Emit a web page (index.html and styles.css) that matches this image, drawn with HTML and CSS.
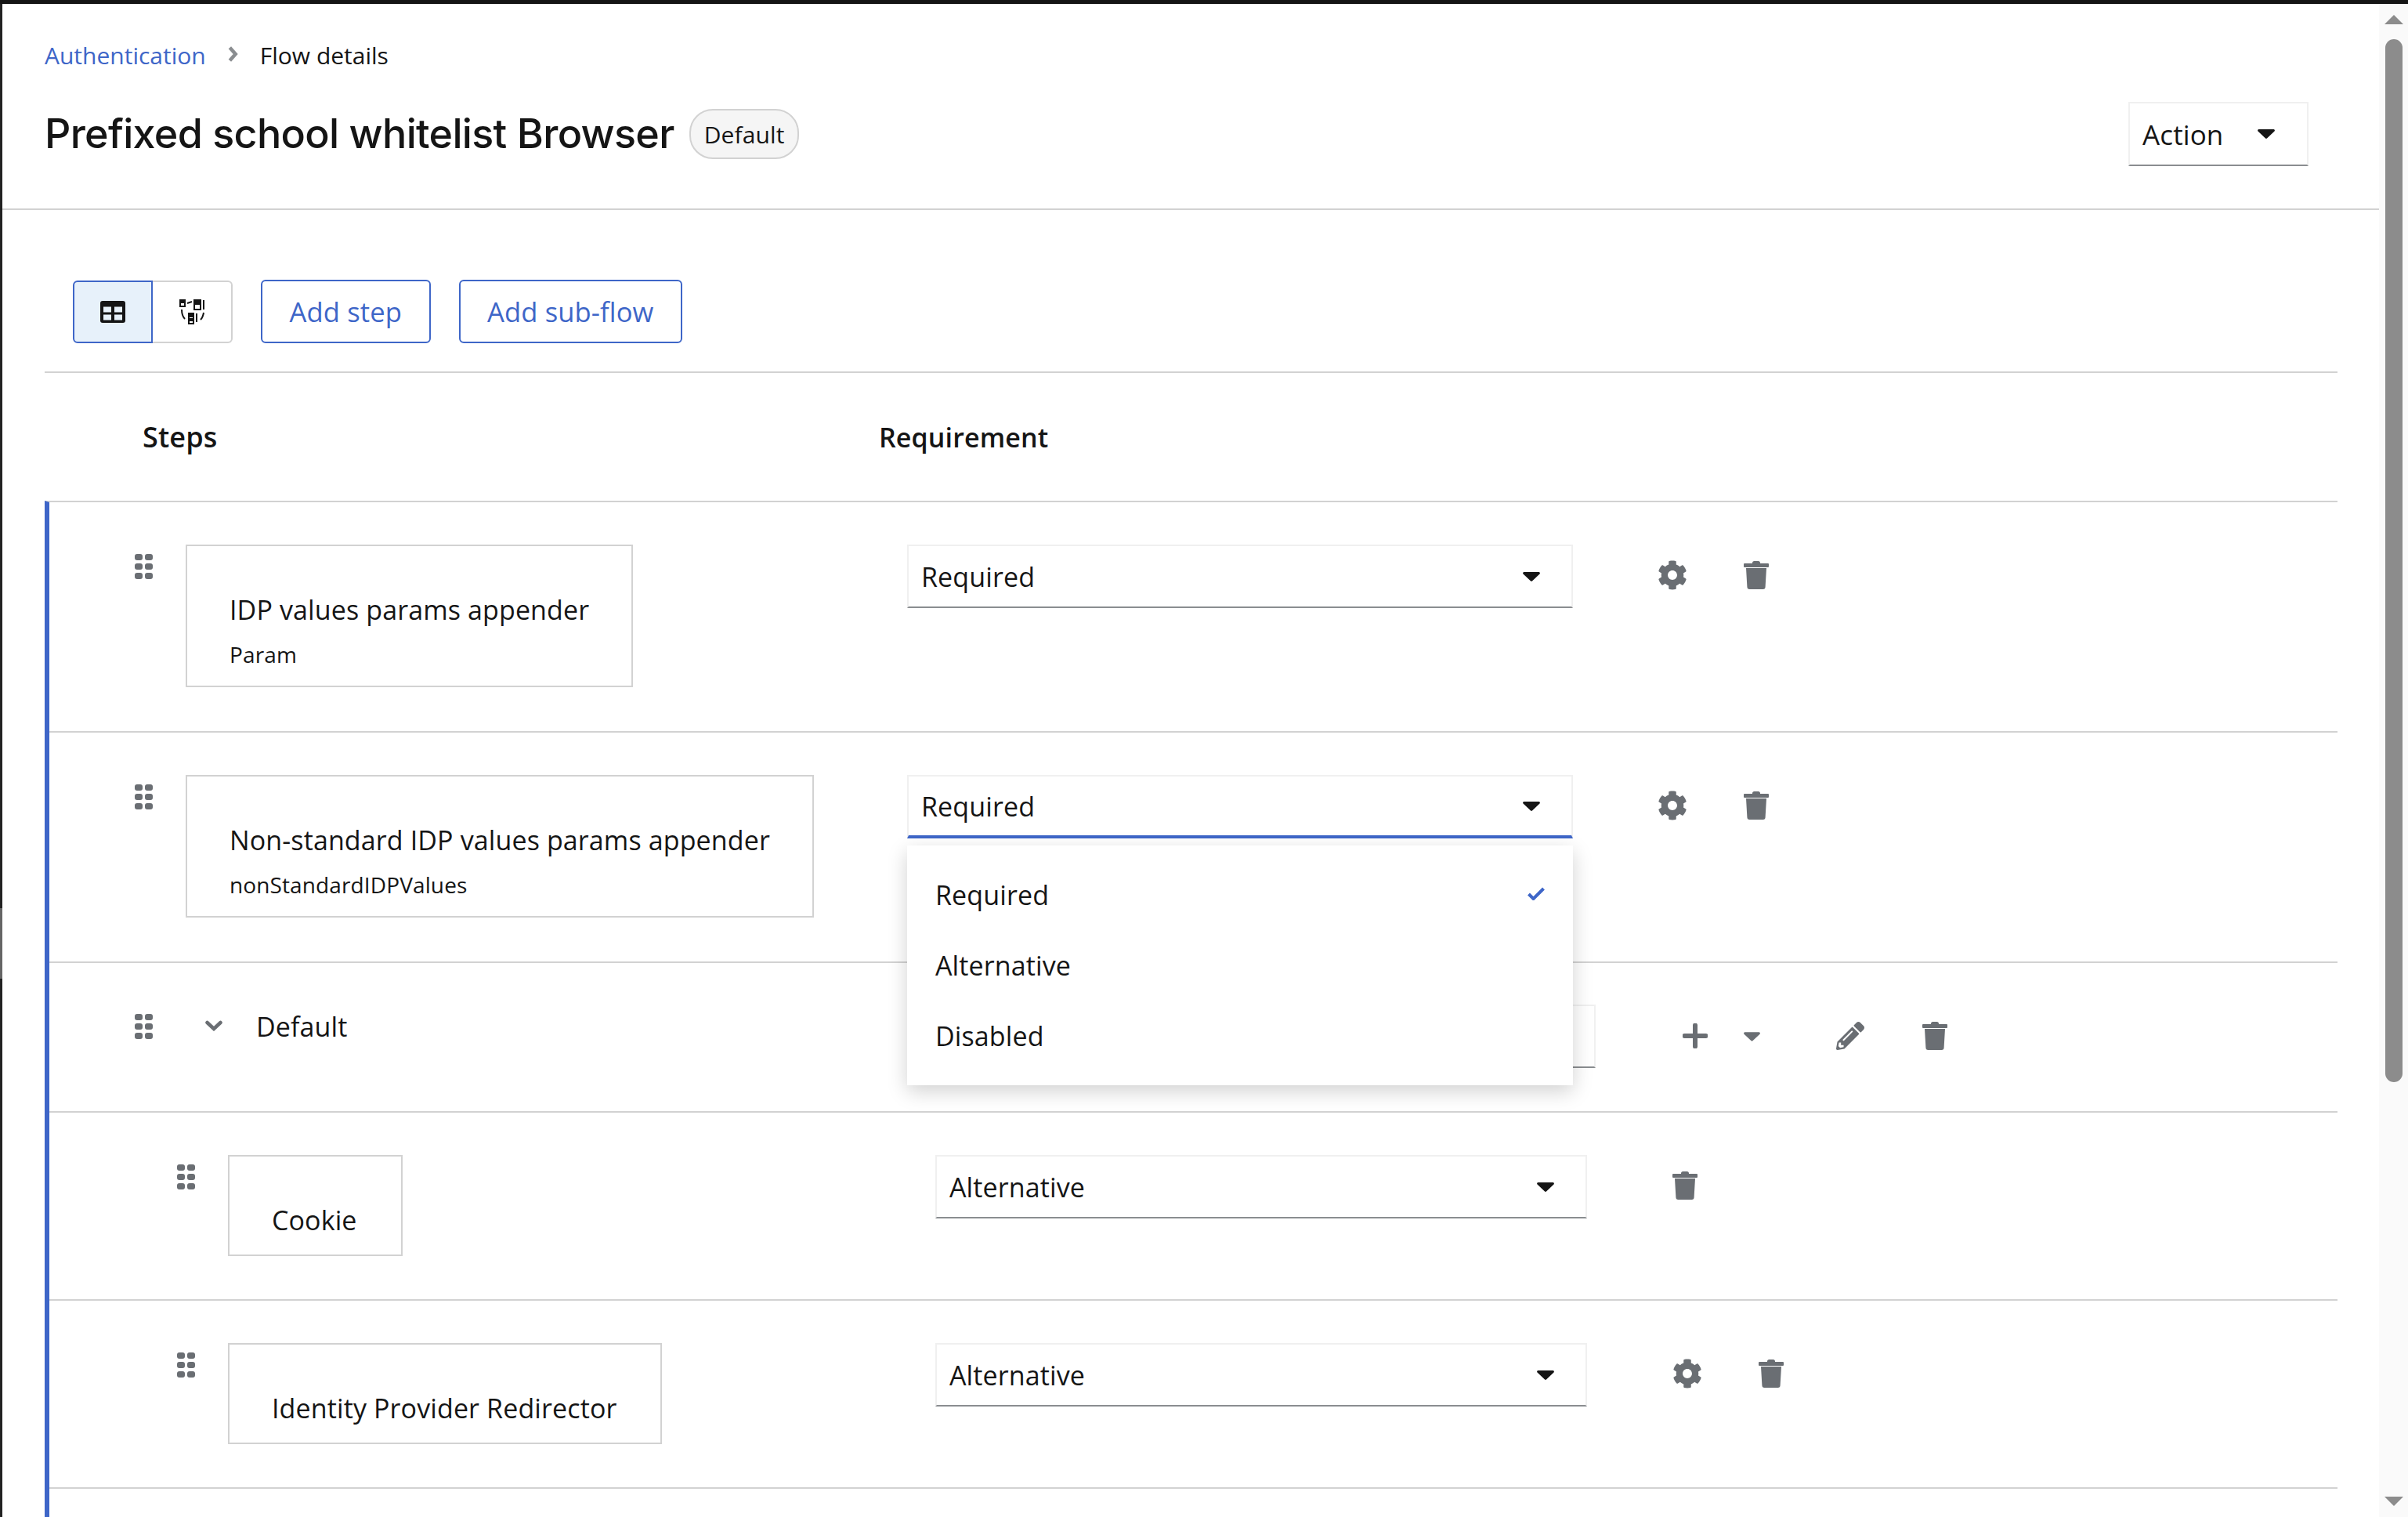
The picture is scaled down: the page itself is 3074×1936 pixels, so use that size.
FILE: index.html
```html
<!DOCTYPE html>
<html lang="en">
<head>
    <meta charset="UTF-8">
    <title>Flow details</title>
    <link rel="stylesheet" href="styles.css">
</head>
<body>
    <svg class="sprites" width="0" height="0">
        <symbol id="gear" viewBox="0 0 512 512"><path d="M487.4 315.7l-42.6-24.6c4.3-23.2 4.3-47 0-70.2l42.6-24.6c4.9-2.8 7.1-8.6 5.5-14-11.1-35.6-30-67.8-54.7-94.6-3.8-4.1-10-5.1-14.8-2.3L380.8 110c-17.9-15.4-38.5-27.3-60.8-35.1V25.8c0-5.6-3.9-10.5-9.4-11.7-36.7-8.2-74.3-7.8-109.2 0-5.5 1.2-9.4 6.1-9.4 11.7V75c-22.2 7.9-42.8 19.8-60.8 35.1L88.7 85.5c-4.9-2.8-11-1.9-14.8 2.3-24.7 26.7-43.6 58.9-54.7 94.6-1.7 5.4.6 11.2 5.5 14L67.3 221c-4.3 23.2-4.3 47 0 70.2l-42.6 24.6c-4.9 2.8-7.1 8.6-5.5 14 11.1 35.6 30 67.8 54.7 94.6 3.8 4.1 10 5.1 14.8 2.3l42.6-24.6c17.9 15.4 38.5 27.3 60.8 35.1v49.2c0 5.6 3.9 10.5 9.4 11.7 36.7 8.2 74.3 7.8 109.2 0 5.5-1.2 9.4-6.1 9.4-11.7v-49.2c22.2-7.9 42.8-19.8 60.8-35.1l42.6 24.6c4.9 2.8 11 1.9 14.8-2.3 24.7-26.7 43.6-58.9 54.7-94.6 1.5-5.5-.7-11.3-5.6-14.1zM256 336c-44.1 0-80-35.9-80-80s35.9-80 80-80 80 35.9 80 80-35.9 80-80 80z"/></symbol>
        <symbol id="trash" viewBox="0 0 32 36"><path d="M11 2.500Q11 0 13.500 0h5Q21 0 21 2.500V3H11zM1 3h30a1 1 0 0 1 1 1v3a1 1 0 0 1-1 1H1a1 1 0 0 1-1-1V4a1 1 0 0 1 1-1zM3 9h26l-1.400 24a3 3 0 0 1-3 3H7.400a3 3 0 0 1-3-3z"/></symbol>
        <symbol id="pencil" viewBox="0 0 512 512"><path d="M497.9 142.1l-46.1 46.1c-4.7 4.7-12.3 4.7-17 0l-111-111c-4.7-4.7-4.7-12.3 0-17l46.1-46.1c18.7-18.7 49.1-18.7 67.9 0l60.1 60.1c18.8 18.7 18.8 49.1 0 67.9zM284.2 99.8L21.6 362.4.4 483.9c-2.900 16.4 11.4 30.6 27.8 27.8l121.5-21.3 262.6-262.6c4.7-4.7 4.700-12.3 0-17l-111-111c-4.8-4.7-12.4-4.700-17.100 0zM124.1 339.9c-5.500-5.500-5.500-14.300 0-19.800l154-154c5.500-5.500 14.300-5.500 19.800 0s5.500 14.300 0 19.800l-154 154c-5.500 5.500-14.300 5.500-19.800 0zM88 424h48v36.300l-64.500 11.300-31.100-31.100L51.700 376H88v48z"/></symbol>
        <symbol id="grip" viewBox="0 0 23 32"><rect x="0" y="0" width="10" height="8" rx="3"/><rect x="13" y="0" width="10" height="8" rx="3"/><rect x="0" y="12" width="10" height="8" rx="3"/><rect x="13" y="12" width="10" height="8" rx="3"/><rect x="0" y="24" width="10" height="8" rx="3"/><rect x="13" y="24" width="10" height="8" rx="3"/></symbol>
        <symbol id="caret" viewBox="0 0 22 12"><path d="M1.500 0h19a1.500 1.500 0 0 1 1 2.500l-9.500 9a1.500 1.500 0 0 1-2 0l-9.500-9A1.500 1.500 0 0 1 1.500 0z"/></symbol>
    </svg>

    <div class="edge">
        <div class="edge-dark"></div>
        <div class="edge-grey"></div>
        <div class="edge-fill"></div>
    </div>

    <main class="page">
        <header class="page-head">
            <nav class="crumbs">
                <a class="crumb-link">Authentication</a>
                <svg class="crumb-sep" viewBox="0 0 14 22"><path d="M3 2l8 9-8 9" fill="none" stroke="#8a8d90" stroke-width="5"/></svg>
                <span>Flow details</span>
            </nav>
            <div class="title-row">
                <h1>Prefixed school whitelist Browser</h1>
                <span class="badge">Default</span>
                <button class="toggle action"><span>Action</span><svg class="caret"><use href="#caret"/></svg></button>
            </div>
        </header>

        <section class="flow">
            <div class="toolbar">
                <div class="view-switch">
                    <button class="view-btn active">
                        <svg class="view-icon" viewBox="0 0 32 28"><rect width="32" height="28" rx="3" fill="#151515"/><rect x="4" y="7.500" width="10" height="7" fill="#e7f1fa"/><rect x="18" y="7.500" width="10" height="7" fill="#e7f1fa"/><rect x="4" y="17.500" width="10" height="7" fill="#e7f1fa"/><rect x="18" y="17.500" width="10" height="7" fill="#e7f1fa"/></svg>
                    </button>
                    <button class="view-btn">
                        <svg class="view-icon topo" viewBox="0 0 32 32" fill="none" stroke="#151515" stroke-width="2"><rect x="1" y="1" width="6" height="8"/><rect x="1" y="1" width="6" height="3" fill="#151515"/><rect x="19" y="1" width="8" height="12"/><rect x="19" y="1" width="8" height="5" fill="#151515"/><rect x="31" y="2" width="0.5" height="10"/><rect x="12" y="18" width="6" height="13"/><rect x="12" y="18" width="6" height="4" fill="#151515"/><rect x="12" y="25" width="6" height="2" fill="#151515"/><path d="M10 5l6-2M22 18v11M3 13q0 8 4 12M31 17q-1 6-4 9"/></svg>
                    </button>
                </div>
                <button class="btn-outline">Add step</button>
                <button class="btn-outline">Add sub-flow</button>
            </div>

            <div class="table-head">
                <div class="head-steps">Steps</div>
                <div class="head-req">Requirement</div>
            </div>

            <div class="rows">
                <div class="row">
                    <div class="row-main">
                        <svg class="grip"><use href="#grip"/></svg>
                        <div class="card">
                            <div class="card-title">IDP values params appender</div>
                            <div class="card-sub">Param</div>
                        </div>
                    </div>
                    <div class="select"><span>Required</span><svg class="caret"><use href="#caret"/></svg></div>
                    <div class="actions">
                        <svg class="icon gear"><use href="#gear"/></svg>
                        <svg class="icon trash"><use href="#trash"/></svg>
                    </div>
                </div>

                <div class="row">
                    <div class="row-main">
                        <svg class="grip"><use href="#grip"/></svg>
                        <div class="card">
                            <div class="card-title">Non-standard IDP values params appender</div>
                            <div class="card-sub">nonStandardIDPValues</div>
                        </div>
                    </div>
                    <div class="select open">
                        <span>Required</span><svg class="caret"><use href="#caret"/></svg>
                        <ul class="menu">
                            <li>Required<svg class="check" viewBox="0 0 22 17"><path d="M1.500 9l6 6L20.500 2" fill="none" stroke="#3e66c8" stroke-width="4"/></svg></li>
                            <li>Alternative</li>
                            <li>Disabled</li>
                        </ul>
                    </div>
                    <div class="actions">
                        <svg class="icon gear"><use href="#gear"/></svg>
                        <svg class="icon trash"><use href="#trash"/></svg>
                    </div>
                </div>

                <div class="row group">
                    <div class="row-main">
                        <svg class="grip"><use href="#grip"/></svg>
                        <svg class="chevron" viewBox="0 0 22 14"><path d="M2.500 3l8.500 8 8.500-8" fill="none" stroke="#6a6e73" stroke-width="4.500" stroke-linecap="round"/></svg>
                        <span class="group-name">Default</span>
                    </div>
                    <div class="select wide"></div>
                    <div class="actions group-actions">
                        <svg class="icon plus" viewBox="0 0 32 32"><path d="M16 2.500v27M2.500 16h27" stroke="#6a6e73" stroke-width="6" stroke-linecap="round"/></svg>
                        <svg class="small-caret"><use href="#caret"/></svg>
                        <svg class="icon pencil"><use href="#pencil"/></svg>
                        <svg class="icon trash"><use href="#trash"/></svg>
                    </div>
                </div>

                <div class="row nested">
                    <div class="row-main">
                        <svg class="grip"><use href="#grip"/></svg>
                        <div class="card">
                            <div class="card-title">Cookie</div>
                        </div>
                    </div>
                    <div class="select"><span>Alternative</span><svg class="caret"><use href="#caret"/></svg></div>
                    <div class="actions">
                        <svg class="icon trash"><use href="#trash"/></svg>
                    </div>
                </div>

                <div class="row nested">
                    <div class="row-main">
                        <svg class="grip"><use href="#grip"/></svg>
                        <div class="card">
                            <div class="card-title">Identity Provider Redirector</div>
                        </div>
                    </div>
                    <div class="select"><span>Alternative</span><svg class="caret"><use href="#caret"/></svg></div>
                    <div class="actions">
                        <svg class="icon gear"><use href="#gear"/></svg>
                        <svg class="icon trash"><use href="#trash"/></svg>
                    </div>
                </div>
            </div>
        </section>
    </main>

    <aside class="scrollbar">
        <div class="arrow-up"></div>
        <div class="thumb"></div>
        <div class="arrow-down"></div>
    </aside>
</body>
</html>
```

FILE: styles.css
```css
* {
    box-sizing: border-box;
}

html, body {
    height: 100%;
}

body {
    margin: 0;
    display: flex;
    height: 1936px;
    overflow: hidden;
    border-top: 5px solid #151515;
    background: #fff;
    color: #151515;
    font-family: "Open Sans", sans-serif;
    font-size: 34px;
    letter-spacing: 0.12px;
}

.sprites {
    position: absolute;
}

button {
    font: inherit;
    letter-spacing: inherit;
    color: inherit;
    background: #fff;
    cursor: pointer;
}

/* window edge */
.edge {
    flex: 0 0 3px;
    display: flex;
    flex-direction: column;
}

.edge-dark {
    height: 1154px;
    background: #222;
}

.edge-grey {
    height: 90px;
    background: #666;
}

.edge-fill {
    flex: 1;
    background: #222;
}

.page {
    flex: 1;
    min-width: 0;
}

/* header */
.page-head {
    height: 263px;
    padding: 43px 90px 0 54px;
    border-bottom: 2px solid #d2d2d2;
}

.crumbs {
    display: flex;
    align-items: center;
    height: 44px;
    font-size: 30px;
    letter-spacing: 0;
}

.crumb-sep {
    width: 14px;
    height: 20px;
    margin: 0 28px 2px 27px;
}

.crumb-link {
    color: #3e66c8;
}

.title-row {
    display: flex;
    align-items: center;
    margin-top: 38px;
}

h1 {
    margin: -2px 0 0;
    font-family: Inter, sans-serif;
    font-size: 52px;
    font-weight: 500;
    letter-spacing: -0.68px;
}

.badge {
    display: flex;
    align-items: center;
    height: 64px;
    margin-left: 19px;
    padding: 0 16px 0 17px;
    border: 2px solid #d2d2d2;
    border-radius: 30px;
    background: #f5f5f5;
    font-size: 30px;
}

.toggle {
    display: flex;
    align-items: center;
    justify-content: space-between;
    border: 2px solid #f0f0f0;
    border-bottom-color: #8a8d90;
}

.action {
    width: 230px;
    height: 82px;
    margin-left: auto;
    padding: 0 41px 0 16px;
    font-size: 35px;
}

.caret {
    width: 22px;
    height: 12px;
    fill: #151515;
}

/* toolbar */
.flow {
    padding: 90px 53px 0 54px;
}

.toolbar {
    display: flex;
    align-items: center;
    gap: 36px;
    height: 118px;
    padding: 0 0 37px 36px;
    border-bottom: 2px solid #d2d2d2;
}

.view-switch {
    display: flex;
}

.view-btn {
    display: flex;
    align-items: center;
    justify-content: center;
    width: 102px;
    height: 80px;
    border: 2px solid #d2d2d2;
    border-left: 0;
    border-radius: 0 6px 6px 0;
}

.view-btn.active {
    border: 2px solid #3e66c8;
    border-radius: 6px 0 0 6px;
    background: #e7f1fa;
}

.view-icon {
    width: 32px;
    height: 28px;
}

.topo {
    height: 32px;
}

.btn-outline {
    height: 81px;
    padding: 0 34.5px;
    border: 2px solid #3e66c8;
    border-radius: 6px;
    color: #3e66c8;
    font-size: 34.6px;
}

/* table */
.table-head {
    display: flex;
    align-items: center;
    height: 163px;
    font-weight: 600;
}

.head-steps {
    width: 1065px;
    padding-left: 125px;
    font-size: 36px;
}

.rows {
    min-height: 1300px;
    border-top: 2px solid #d2d2d2;
    border-left: 6px solid #3e66c8;
}

.row {
    display: flex;
    align-items: flex-start;
    padding: 54px 0 56px;
    border-bottom: 2px solid #d2d2d2;
}

.row-main {
    flex: 0 0 1095px;
    display: flex;
    align-items: flex-start;
    padding-left: 109px;
}

.grip {
    flex: none;
    width: 23px;
    height: 32px;
    margin-top: 12px;
    fill: #6a6e73;
}

.card {
    margin-left: 42px;
    padding: 58px 54px 20px;
    border: 2px solid #d2d2d2;
}

.card-title {
    line-height: 46px;
}

.card-sub {
    margin-top: 14px;
    line-height: 40px;
    font-size: 28px;
}

.select {
    position: relative;
    flex: none;
    display: flex;
    align-items: center;
    justify-content: space-between;
    width: 850px;
    height: 81px;
    padding: 0 40px 0 16px;
    border: 2px solid #f0f0f0;
    border-bottom-color: #8a8d90;
}

.select.open {
    border-bottom: 4px solid #3e66c8;
}

.menu {
    position: absolute;
    z-index: 5;
    top: 88px;
    left: -2px;
    width: 850px;
    margin: 0;
    padding: 18px 0;
    list-style: none;
    background: #fff;
    box-shadow: 0 8px 24px rgba(3, 3, 3, 0.18);
}

.menu li {
    display: flex;
    align-items: center;
    justify-content: space-between;
    height: 90px;
    padding: 0 36px 0 36px;
}

.check {
    width: 22px;
    height: 17px;
    margin-top: -3px;
}

.actions {
    display: flex;
    align-items: flex-start;
    gap: 76px;
    padding: 21px 0 0 108px;
}

.icon {
    flex: none;
    width: 34px;
    height: 36px;
    fill: #6a6e73;
}

.gear {
    width: 38px;
    height: 38px;
    margin: -1px -4px 0 0;
}

.trash {
    width: 32px;
}

/* sub-flow group */
.group {
    padding: 53px 0 55px;
}

.chevron {
    flex: none;
    width: 22px;
    height: 14px;
    margin: 20px 0 0 67px;
}

.group-name {
    margin-left: 43px;
    line-height: 46px;
    margin-top: 5px;
}

.select.wide {
    width: 879px;
}

.group-actions {
    gap: 0;
    padding: 24px 0 0 111px;
}

.plus {
    width: 32px;
    height: 32px;
}

.small-caret {
    flex: none;
    width: 21px;
    height: 12px;
    margin: 11px 0 0 46px;
    fill: #6a6e73;
}

.pencil {
    width: 36px;
    margin: -2px 0 0 97px;
}

.group-actions .trash {
    margin: -2px 0 0 74px;
}

/* nested steps */
.nested {
    padding: 54px 0 55px;
}

.nested .row-main {
    flex-basis: 1131px;
    padding-left: 163px;
}

.nested .card {
    padding: 58px 56px 21px 54px;
}

.nested .select {
    width: 832px;
}

.nested .actions {
    padding-left: 109px;
}

/* scrollbar */
.scrollbar {
    flex: 0 0 37px;
    display: flex;
    flex-direction: column;
    align-items: center;
    background: #fafafa;
}

.arrow-up, .arrow-down {
    width: 0;
    height: 0;
    border-left: 12px solid transparent;
    border-right: 12px solid transparent;
}

.arrow-up {
    margin-top: 14px;
    border-bottom: 12px solid #8c8c8c;
}

.arrow-down {
    margin-top: 529px;
    border-top: 12px solid #8c8c8c;
}

.thumb {
    width: 22px;
    height: 1331px;
    margin-top: 19px;
    border-radius: 11px;
    background: #8c8c8c;
}
```
